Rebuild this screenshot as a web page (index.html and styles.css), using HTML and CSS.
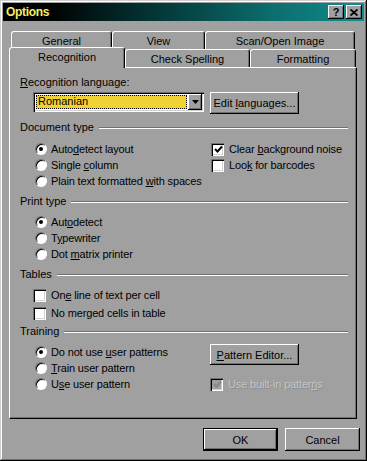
FILE: index.html
```html
<!DOCTYPE html>
<html lang="en">
<head>
    <meta charset="UTF-8">
    <title>Options</title>
    <link rel="stylesheet" href="styles.css">
</head>
<body>
    <div class="window">
        <div class="titlebar">
            <span class="title">Options</span>
            <div class="title-buttons">
                <span class="tbtn">?</span>
                <span class="tbtn">
                    <svg width="8" height="7" viewBox="0 0 8 7"><path d="M0.5 0.5 L7.5 6.5 M7.5 0.5 L0.5 6.5" stroke="#000" stroke-width="1.8"/></svg>
                </span>
            </div>
        </div>

        <div class="tabs">
            <div class="tab-row back">
                <div class="tab tab-general">General</div>
                <div class="tab tab-view">View</div>
                <div class="tab tab-scan">Scan/Open Image</div>
            </div>
            <div class="tab-row front">
                <div class="tab tab-recognition selected">Recognition</div>
                <div class="tab tab-spelling">Check Spelling</div>
                <div class="tab tab-formatting">Formatting</div>
            </div>
        </div>

        <div class="panel">
            <div class="field-label"><u>R</u>ecognition language:</div>
            <div class="lang-row">
                <div class="combo">
                    <div class="combo-value">Romanian</div>
                    <div class="combo-arrow">
                        <svg width="7" height="4" viewBox="0 0 7 4"><path d="M0 0 H7 L3.5 4 Z" fill="#000"/></svg>
                    </div>
                </div>
                <button class="btn edit-btn">Edit <u>l</u>anguages...</button>
            </div>

            <div class="group-head">Document type<span class="rule"></span></div>
            <div class="group doc-group">
                <div class="col left">
                    <div class="opt"><span class="radio on"></span><span>Auto<u>d</u>etect layout</span></div>
                    <div class="opt"><span class="radio"></span><span>Single <u>c</u>olumn</span></div>
                    <div class="opt"><span class="radio"></span><span>Plain text formatted <u>w</u>ith spaces</span></div>
                </div>
                <div class="col">
                    <div class="opt"><span class="check on"><svg width="9" height="9" viewBox="0 0 9 9"><path d="M1 4 L3.5 6.5 L8 1.5" fill="none" stroke="#000" stroke-width="2"/></svg></span><span>Clear <u>b</u>ackground noise</span></div>
                    <div class="opt"><span class="check"></span><span>Loo<u>k</u> for barcodes</span></div>
                </div>
            </div>

            <div class="group-head print-head">Print type<span class="rule"></span></div>
            <div class="group print-group">
                <div class="col left">
                    <div class="opt"><span class="radio on"></span><span>Aut<u>o</u>detect</span></div>
                    <div class="opt"><span class="radio"></span><span>T<u>y</u>pewriter</span></div>
                    <div class="opt"><span class="radio"></span><span>Dot <u>m</u>atrix printer</span></div>
                </div>
            </div>

            <div class="group-head tables-head">Tables<span class="rule"></span></div>
            <div class="group tables-group">
                <div class="col">
                    <div class="opt tall"><span class="check"></span><span>On<u>e</u> line of text per cell</span></div>
                    <div class="opt tall"><span class="check"></span><span>No merged cells in table</span></div>
                </div>
            </div>

            <div class="group-head training-head">Training<span class="rule"></span></div>
            <div class="group training-group">
                <div class="col left">
                    <div class="opt"><span class="radio on"></span><span>Do not use <u>u</u>ser patterns</span></div>
                    <div class="opt"><span class="radio"></span><span><u>T</u>rain user pattern</span></div>
                    <div class="opt"><span class="radio"></span><span>U<u>s</u>e user pattern</span></div>
                </div>
                <div class="col right-train">
                    <button class="btn pattern-btn"><u>P</u>attern Editor...</button>
                    <div class="opt disabled"><span class="check off"><svg width="9" height="9" viewBox="0 0 9 9"><path d="M1 4 L3.5 6.5 L8 1.5" fill="none" stroke="#888" stroke-width="2"/></svg></span><span>Use built-in patter<u>n</u>s</span></div>
                </div>
            </div>
        </div>

        <div class="actions">
            <button class="btn default-btn">OK</button>
            <button class="btn">Cancel</button>
        </div>
    </div>
</body>
</html>
```

FILE: styles.css
```css
* {
    box-sizing: border-box;
}

body {
    margin: 0;
    font-family: "Liberation Sans", Arial, sans-serif;
    font-size: 11px;
    color: #000;
    background-color: #a0a0a0;
}

u {
    text-decoration: underline;
    text-underline-offset: 1px;
}

.window {
    width: 367px;
    height: 461px;
    padding: 3px;
    background-color: #a0a0a0;
    box-shadow: inset -1px -1px #000, inset 1px 1px #d0d0d0, inset -2px -2px #707070, inset 2px 2px #fff;
}

.titlebar {
    height: 18px;
    display: flex;
    align-items: center;
    justify-content: space-between;
    padding: 0 2px 0 3px;
    background: linear-gradient(to right, #000 0%, #000 12%, #03292a 35%, #0c6e6e 75%, #118c8c 100%);
}

.title {
    font-weight: bold;
    font-size: 12px;
    color: #f4ec68;
    letter-spacing: -0.3px;
}

.title-buttons {
    display: flex;
    gap: 2px;
}

.tbtn {
    width: 16px;
    height: 14px;
    display: flex;
    align-items: center;
    justify-content: center;
    font-weight: bold;
    font-size: 11px;
    background-color: #a0a0a0;
    box-shadow: inset -1px -1px #000, inset 1px 1px #fff, inset -2px -2px #707070;
}

/* tabs */
.tabs {
    padding: 10px 0 0 6px;
}

.tab-row {
    display: flex;
    height: 18px;
}

.tab-row.back {
    padding-left: 2px;
}

.tab-row.front {
    align-items: flex-end;
}

.tab {
    height: 18px;
    display: flex;
    align-items: center;
    justify-content: center;
    background-color: #a0a0a0;
    border-top: 1px solid #fff;
    border-left: 1px solid #fff;
    border-right: 1px solid #000;
    box-shadow: inset -1px 0 #707070;
    border-radius: 3px 3px 0 0;
}

.tab-general { width: 101px; }
.tab-view { width: 93px; }
.tab-scan { width: 150px; }
.tab-recognition { width: 116px; }
.tab-spelling { width: 125px; }
.tab-formatting { width: 106px; }

.tab.selected {
    height: 21px;
    margin-bottom: -1px;
    position: relative;
    z-index: 1;
    padding-bottom: 2px;
}

/* panel */
.panel {
    margin-left: 6px;
    width: 348px;
    height: 352px;
    padding: 8px 8px 0 10px;
    border: 1px solid;
    border-color: #fff #000 #000 #fff;
    box-shadow: inset -1px -1px #707070;
}

.field-label {
    height: 13px;
    line-height: 13px;
}

.lang-row {
    display: flex;
    margin-top: 3px;
}

.combo {
    margin-left: 13px;
    width: 171px;
    height: 20px;
    display: flex;
    padding: 2px;
    background-color: #fff;
    box-shadow: inset 1px 1px #707070, inset 2px 2px #000, inset -1px -1px #fff, inset -2px -2px #d0d0d0;
}

.combo-value {
    flex: 1;
    margin: 1px;
    padding-left: 2px;
    line-height: 12px;
    background-color: #f0d232;
    outline: 1px dotted #000;
    outline-offset: -1px;
}

.combo-arrow {
    width: 14px;
    display: flex;
    align-items: center;
    justify-content: center;
    background-color: #a0a0a0;
    box-shadow: inset -1px -1px #000, inset 1px 1px #fff, inset -2px -2px #707070;
}

.btn {
    font-family: "Liberation Sans", Arial, sans-serif;
    font-size: 11px;
    color: #000;
    background-color: #a0a0a0;
    border: none;
    padding: 0;
    box-shadow: inset -1px -1px #000, inset 1px 1px #fff, inset -2px -2px #707070;
}

.edit-btn {
    margin-left: 6px;
    width: 89px;
    height: 22px;
}

/* groups */
.group-head {
    display: flex;
    align-items: center;
    height: 13px;
    line-height: 13px;
    margin-top: 7px;
}

.rule {
    flex: 1;
    height: 2px;
    margin-left: 5px;
    border-top: 1px solid #707070;
    border-bottom: 1px solid #fff;
}

.print-head,
.tables-head {
    margin-top: 6px;
}

.training-head {
    margin-top: 3px;
}

.group {
    display: flex;
    margin-top: 7px;
    padding-left: 15px;
}

.print-group,
.training-group {
    margin-top: 6px;
}

.tables-group {
    margin-top: 5px;
    padding-left: 13px;
}

.col.left {
    width: 176px;
}

.opt {
    display: flex;
    align-items: center;
    height: 16px;
    white-space: nowrap;
    letter-spacing: -0.15px;
}

.opt.tall {
    height: 18px;
}

.radio {
    width: 12px;
    height: 12px;
    margin-right: 4px;
    border-radius: 50%;
    background-color: #fff;
    border: 1px solid;
    border-color: #707070 #fff #fff #707070;
    box-shadow: inset 1px 1px #000;
    position: relative;
}

.radio.on::after {
    content: '';
    position: absolute;
    left: 3px;
    top: 3px;
    width: 4px;
    height: 4px;
    border-radius: 50%;
    background-color: #000;
}

.check {
    width: 13px;
    height: 13px;
    margin-right: 5px;
    display: flex;
    align-items: center;
    justify-content: center;
    background-color: #fff;
    box-shadow: inset 1px 1px #707070, inset 2px 2px #000, inset -1px -1px #fff, inset -2px -2px #d0d0d0;
}

.check svg {
    margin: 1px 0 0 1px;
}

.check.off {
    background-color: #a0a0a0;
}

.right-train {
    display: flex;
    flex-direction: column;
}

.pattern-btn {
    margin-left: -1px;
    width: 89px;
    height: 21px;
    margin-bottom: 11px;
}

.opt.disabled {
    margin-left: -1px;
    color: #c4c4c4;
    text-shadow: 1px 1px #8c8c8c;
}

/* bottom buttons */
.actions {
    display: flex;
    justify-content: flex-end;
    gap: 7px;
    padding: 9px 4px 0 0;
}

.actions .btn {
    width: 75px;
    height: 23px;
}

.default-btn {
    box-shadow: inset 0 0 0 1px #000, inset -2px -2px #000, inset 2px 2px #fff, inset -3px -3px #707070;
}
```
